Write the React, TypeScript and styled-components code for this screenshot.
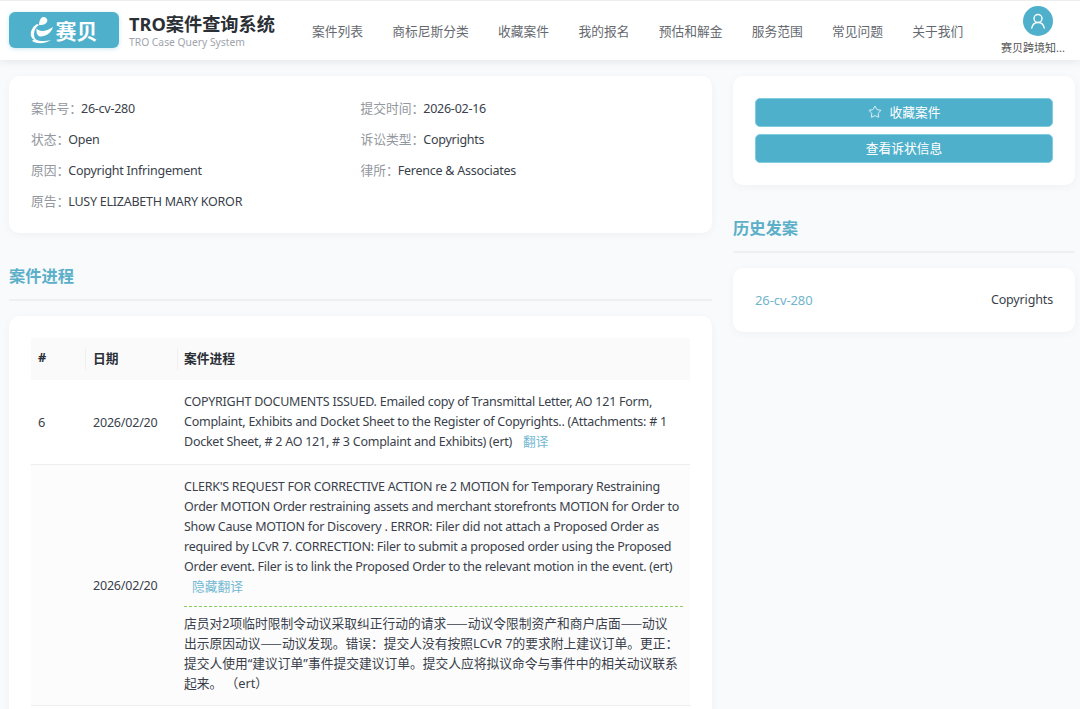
import React from 'react';
import styled, { createGlobalStyle, css } from 'styled-components';
import { Star } from 'lucide-react';

const Global = createGlobalStyle`
  html, body { margin: 0; padding: 0; height: 709px; overflow: hidden; background: #f8fafc; }
  body { font-family: "Noto Sans", "Noto Sans CJK SC", sans-serif; font-size: 12.75px; color: #3a3f4b; }
  * { box-sizing: border-box; }
`;
const latin = css` font-size: 12.5px; letter-spacing: -0.25px; `;
const Header = styled.header`
  height: 60px; background: #fff; display: flex; align-items: center; padding: 0 15px 0 9px;
  box-shadow: 0 2px 8px rgba(0,0,0,.08); border-top: 1px solid #eee;
`;
const LogoBox = styled.div`
  width: 110px; height: 36px; border-radius: 6px; background: #4fb0cb; display: flex; align-items: center; justify-content: center; gap: 2px;
  color: #fff; font-weight: 700; font-size: 21px; box-shadow: 0 1px 4px rgba(79,176,203,.3); margin-top: -1px; padding-right: 1px;
`;
const Brand = styled.div` margin-left: 10px; width: 183px; display: flex; flex-direction: column; padding-top: 1px; `;
const BrandTitle = styled.div` font-size: 18.2px; font-weight: 700; line-height: 22px; color: #2b2f36; white-space: nowrap; `;
const BrandSub = styled.div` font-size: 10.3px; line-height: 14px; color: #a0a4ab; white-space: nowrap; `;
const Nav = styled.nav` display: flex; gap: 29.3px; `;
const NavItem = styled.a` color: #666a70; white-space: nowrap; `;
const User = styled.div` margin-left: auto; width: 64px; display: flex; flex-direction: column; align-items: center; gap: 5px; `;
const Avatar = styled.div` width: 30px; height: 30px; border-radius: 50%; background: #4fb0cb; display: flex; align-items: center; justify-content: center; margin-left: 10px; `;
const UserName = styled.div` font-size: 11px; line-height: 14px; color: #555; white-space: nowrap; `;
const Main = styled.main` display: grid; grid-template-columns: 703px 342px; gap: 21px; padding: 16px 5px 0 9px; `;
const Col = styled.div` display: flex; flex-direction: column; `;
const Card = styled.section<{ $p?: string }>`
  background: #fff; border-radius: 10px; box-shadow: 0 2px 10px rgba(0,0,0,.04); padding: ${p => p.$p || '22px'};
`;
const InfoGrid = styled.div` display: grid; grid-template-columns: 329.5px 1fr; grid-auto-rows: 31px; `;
const Info = styled.div` display: flex; align-items: baseline; white-space: nowrap; line-height: 20px; height: 20px; `;
const Label = styled.span` color: #93979e; margin-right: -1px; `;
const Value = styled.span` color: #3a3f4b; ${latin} `;
const Button = styled.button`
  width: 100%; height: 29px; border: 1px solid #7fcbe0; border-radius: 5px; background: #4fb0cb; color: #fff; font: inherit;
  display: flex; align-items: center; justify-content: center; gap: 8px; padding: 0 0 2px;
`;
const Buttons = styled.div` display: flex; flex-direction: column; gap: 7px; `;
const SectionTitle = styled.h2`
  margin: 22px 0 15px; height: 46px; padding: 10px 0 0; border-bottom: 2px solid #eef0f3; font-size: 16.25px; line-height: 22px; font-weight: 700; color: #5bafc8;
`;
const HistoryRow = styled.div` display: flex; justify-content: space-between; line-height: 20px; `;
const CaseLink = styled.a` color: #72b4cc; font-size: 13px; letter-spacing: -0.1px; `;
const HistoryType = styled.span` font-size: 12.5px; letter-spacing: -0.15px; `;
const Table = styled.table` width: 100%; border-collapse: collapse; table-layout: fixed; `;
const Th = styled.th<{ $w?: number; $sep?: boolean; $pl?: number }>`
  position: relative; width: ${p => p.$w ? p.$w + 'px' : 'auto'}; height: 42px; background: #fafafa; text-align: left; padding: 0 7px 4px ${p => p.$pl ?? 7}px; font-weight: 700; color: #2b2f36;
  ${p => p.$sep ? `&::before { content: ""; position: absolute; left: 0; top: 10px; bottom: 10px; width: 1px; background: #f0f0f0; }` : ''}
`;
const Tr = styled.tr<{ $bg?: boolean }>` background: ${p => p.$bg ? '#fcfcfc' : '#fff'}; border-bottom: 1px solid #eeeeee; `;
const Td = styled.td<{ $pl?: number }>` padding: 12px 7px 12px ${p => p.$pl ?? 7}px; line-height: 20px; color: #3a3f4b; vertical-align: middle; `;
const DateText = styled.span` font-size: 12.5px; letter-spacing: -0.2px; `;
const Line = styled.div` white-space: nowrap; height: 20px; ${latin} `;
const CjkLine = styled.div` white-space: nowrap; `;
const Dash = styled.span` font-family: "Noto Sans CJK SC", sans-serif; `;
const Trans = styled.a` color: #72b8d2; margin-left: 8px; font-size: 12.75px; letter-spacing: 0; line-height: 1; `;
const TransBlock = styled.div` margin-top: 9px; padding-top: 6px; border-top: 1px dashed #8ccb5e; width: 499px; `;

export default function App() {
  return (
    <>
      <Global />
      <Header>
        <LogoBox>
          <svg width="24" height="28" viewBox="0 0 24 28" fill="#fff">
            <path d="M13 1c3 0 5 2 4 5-2 3-5 3-8 3 0-3 1-7 4-8z" />
            <path d="M7 8C2 11 0 16 1 20c1 3 3 4 6 5-2-2-3-4-3-7 0-4 2-7 5-9z" />
            <path d="M6.500 12.500c3 3.500 9 3.500 16.500-1.500-2 6-7 9.500-12 9.500-3 0-5-2.500-4.500-8z" />
            <path d="M2 25c6 3.500 14 2.500 19-1-5 1-11 2-15-.5-2 0-3 .5-4 1.500z" />
          </svg>
          赛贝
        </LogoBox>
        <Brand>
          <BrandTitle>TRO案件查询系统</BrandTitle>
          <BrandSub>TRO Case Query System</BrandSub>
        </Brand>
        <Nav>
          {['案件列表','商标尼斯分类','收藏案件','我的报名','预估和解金','服务范围','常见问题','关于我们'].map(t => <NavItem key={t}>{t}</NavItem>)}
        </Nav>
        <User>
          <Avatar>
            <svg width="18" height="18" viewBox="0 0 18 18" fill="none" stroke="#fff" strokeWidth="1.4" strokeLinecap="round">
              <circle cx="9" cy="6.5" r="4" />
              <path d="M2.8 16c.6-3.4 3-5.500 6.200-5.500s5.600 2.100 6.200 5.500" />
            </svg>
          </Avatar>
          <UserName>赛贝跨境知...</UserName>
        </User>
      </Header>
      <Main>
        <Col>
          <Card $p="22px 22px 11px">
            <InfoGrid>
              <Info><Label>案件号：</Label><Value>26-cv-280</Value></Info>
              <Info><Label>提交时间：</Label><Value>2026-02-16</Value></Info>
              <Info><Label>状态：</Label><Value>Open</Value></Info>
              <Info><Label>诉讼类型：</Label><Value>Copyrights</Value></Info>
              <Info><Label>原因：</Label><Value>Copyright Infringement</Value></Info>
              <Info><Label>律所：</Label><Value>Ference &amp; Associates</Value></Info>
              <Info><Label>原告：</Label><Value>LUSY ELIZABETH MARY KOROR</Value></Info>
            </InfoGrid>
          </Card>
          <SectionTitle>案件进程</SectionTitle>
          <Card>
            <Table>
              <thead>
                <tr>
                  <Th $w={54}>#</Th>
                  <Th $w={92} $sep $pl={8}>日期</Th>
                  <Th $sep>案件进程</Th>
                </tr>
              </thead>
              <tbody>
                <Tr>
                  <Td>6</Td>
                  <Td $pl={8}><DateText>2026/02/20</DateText></Td>
                  <Td>
                    <Line>COPYRIGHT DOCUMENTS ISSUED. Emailed copy of Transmittal Letter, AO 121 Form,</Line>
                    <Line>Complaint, Exhibits and Docket Sheet to the Register of Copyrights.. (Attachments: # 1</Line>
                    <Line>Docket Sheet, # 2 AO 121, # 3 Complaint and Exhibits) (ert) <Trans>翻译</Trans></Line>
                  </Td>
                </Tr>
                <Tr $bg>
                  <Td />
                  <Td $pl={8}><DateText>2026/02/20</DateText></Td>
                  <Td>
                    <Line>CLERK'S REQUEST FOR CORRECTIVE ACTION re 2 MOTION for Temporary Restraining</Line>
                    <Line>Order MOTION Order restraining assets and merchant storefronts MOTION for Order to</Line>
                    <Line>Show Cause MOTION for Discovery . ERROR: Filer did not attach a Proposed Order as</Line>
                    <Line>required by LCvR 7. CORRECTION: Filer to submit a proposed order using the Proposed</Line>
                    <Line>Order event. Filer is to link the Proposed Order to the relevant motion in the event. (ert)</Line>
                    <Line><Trans>隐藏翻译</Trans></Line>
                    <TransBlock>
                      <CjkLine>店员对2项临时限制令动议采取纠正行动的请求<Dash>——</Dash>动议令限制资产和商户店面<Dash>——</Dash>动议</CjkLine>
                      <CjkLine>出示原因动议<Dash>——</Dash>动议发现。错误：提交人没有按照LCvR 7的要求附上建议订单。更正：</CjkLine>
                      <CjkLine>提交人使用“建议订单”事件提交建议订单。提交人应将拟议命令与事件中的相关动议联系</CjkLine>
                      <CjkLine>起来。 （ert）</CjkLine>
                    </TransBlock>
                  </Td>
                </Tr>
              </tbody>
            </Table>
          </Card>
        </Col>
        <Col>
          <Card>
            <Buttons>
              <Button><Star size={14} strokeWidth={1.4} />收藏案件</Button>
              <Button>查看诉状信息</Button>
            </Buttons>
          </Card>
          <SectionTitle>历史发案</SectionTitle>
          <Card>
            <HistoryRow>
              <CaseLink>26-cv-280</CaseLink>
              <HistoryType>Copyrights</HistoryType>
            </HistoryRow>
          </Card>
        </Col>
      </Main>
    </>
  );
}
